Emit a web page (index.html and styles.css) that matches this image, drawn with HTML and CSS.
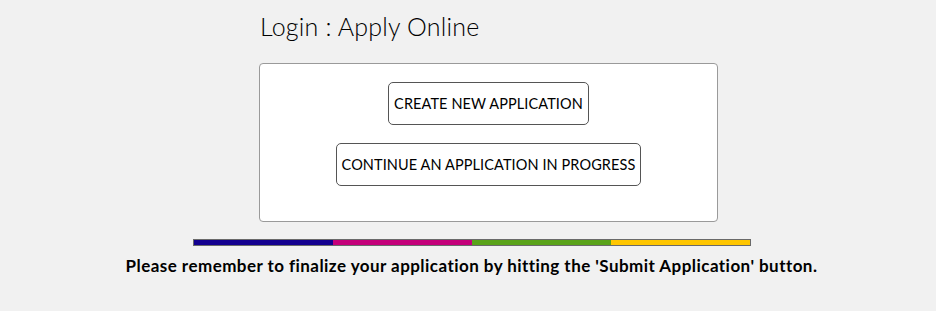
FILE: index.html
```html
<!DOCTYPE html>
<html lang="en">
<head>
  <meta charset="UTF-8" />
  <meta name="viewport" content="width=device-width, initial-scale=1.0" />
  <title>Login : Apply Online</title>
  <link rel="stylesheet" href="styles.css">
</head>
<body>

  <div class="login-col">
    <h1 class="titulo">Login : Apply Online</h1>

    <div class="login-box">
      <button class="btn-app">CREATE NEW APPLICATION</button>
      <button class="btn-app">CONTINUE AN APPLICATION IN PROGRESS</button>
    </div>
  </div>

  <!-- faixa colorida -->
  <div class="faixa">
    <span class="faixa-azul"></span>
    <span class="faixa-rosa"></span>
    <span class="faixa-verde"></span>
    <span class="faixa-amarela"></span>
  </div>

  <p class="aviso">Please remember to finalize your application by hitting the 'Submit Application' button.</p>

</body>
</html>
```

FILE: styles.css
```css
body {
  margin: 0;
  background: #f1f1f1;
  font-family: Lato, "Open Sans", sans-serif;
  color: #000;
}

.login-col {
  width: 459px;
  margin-left: 259px;
  padding-top: 10px;
}

.titulo {
  margin: 0 0 0 1px;
  font-size: 25px;
  font-weight: 300;
  letter-spacing: 0.2px;
  line-height: 32px;
  height: 53px;
}

.login-box {
  display: flex;
  flex-direction: column;
  align-items: center;
  gap: 18px;
  background: #fff;
  border: 1px solid #9a9a9a;
  border-radius: 4px;
  padding: 18px 0 35px;
}

.btn-app {
  height: 43px;
  padding: 0 5px;
  background: #fff;
  border: 1px solid #555;
  border-radius: 5px;
  font-family: Lato, "Open Sans", sans-serif;
  font-size: 14.5px;
  letter-spacing: 0.1px;
  color: #000;
  cursor: pointer;
}

.faixa {
  display: flex;
  width: 556px;
  height: 5px;
  margin: 17px 0 0 193px;
  border: 1px solid #6a6a6a;
}

.faixa span {
  flex: 1;
}

.faixa-azul { background: #13008f; }
.faixa-rosa { background: #c4007a; }
.faixa-verde { background: #5aa31a; }
.faixa-amarela { background: #ffc600; }

.aviso {
  margin: 9px 0 0 7px;
  text-align: center;
  font-size: 17px;
  font-weight: bold;
  letter-spacing: 0.45px;
  line-height: 22px;
}
```
